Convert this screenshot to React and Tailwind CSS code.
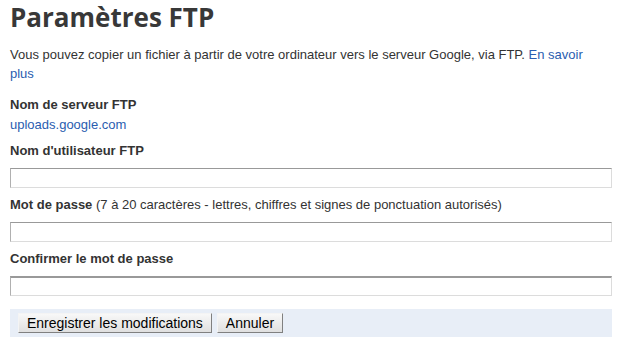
export default function App() {
  const label = "text-[13px] font-bold text-[#333]";
  const input =
    "block w-[602px] h-[20px] bg-white border border-t-[#999] border-l-[#b0b0b0] border-r-[#dcdcdc] border-b-[#dcdcdc] outline-none";
  const btn =
    "h-[20px] px-[8px] text-[14px] text-black bg-gradient-to-b from-[#f8f8f8] to-[#e0e0e0] border border-t-[#f4f4f4] border-l-[#f4f4f4] border-r-[#808080] border-b-[#808080] leading-none";
  return (
    <div className="w-[624px] h-[359px] bg-white px-[10px] overflow-hidden" style={{ fontFamily: '"Liberation Sans", Arial, sans-serif' }}>
      <h1
        className="text-[26px] font-bold text-[#383838] leading-[30px] pt-[2px]"
        style={{ fontFamily: '"Open Sans", sans-serif' }}
      >
        Paramètres FTP
      </h1>
      <p className="mt-[13px] text-[13px] leading-[19px] text-[#333] w-[590px]">
        Vous pouvez copier un fichier à partir de votre ordinateur vers le serveur Google, via FTP.{" "}
        <a className="text-[#2a5db0]">En savoir plus</a>
      </p>
      <div className={`${label} mt-[12px] leading-[20px]`}>Nom de serveur FTP</div>
      <div className="text-[13px] leading-[20px] text-[#2a5db0]">uploads.google.com</div>
      <div className={`${label} mt-[6px] leading-[20px]`}>Nom d'utilisateur FTP</div>
      <input className={`${input} mt-[7px]`} />
      <div className={`${label} mt-[7px] leading-[20px]`}>
        Mot de passe <span className="font-normal">(7 à 20 caractères - lettres, chiffres et signes de ponctuation autorisés)</span>
      </div>
      <input type="password" className={`${input} mt-[7px]`} />
      <div className={`${label} mt-[7px] leading-[20px]`}>Confirmer le mot de passe</div>
      <input type="password" className={`${input} mt-[7px] border-t-2 border-t-[#8a8a8a]`} />
      <div className="mt-[13px] w-[602px] h-[28px] bg-[#e8eef7] flex items-center gap-[5px] px-[8px]">
        <button className={btn}>Enregistrer les modifications</button>
        <button className={btn}>Annuler</button>
      </div>
    </div>
  );
}
